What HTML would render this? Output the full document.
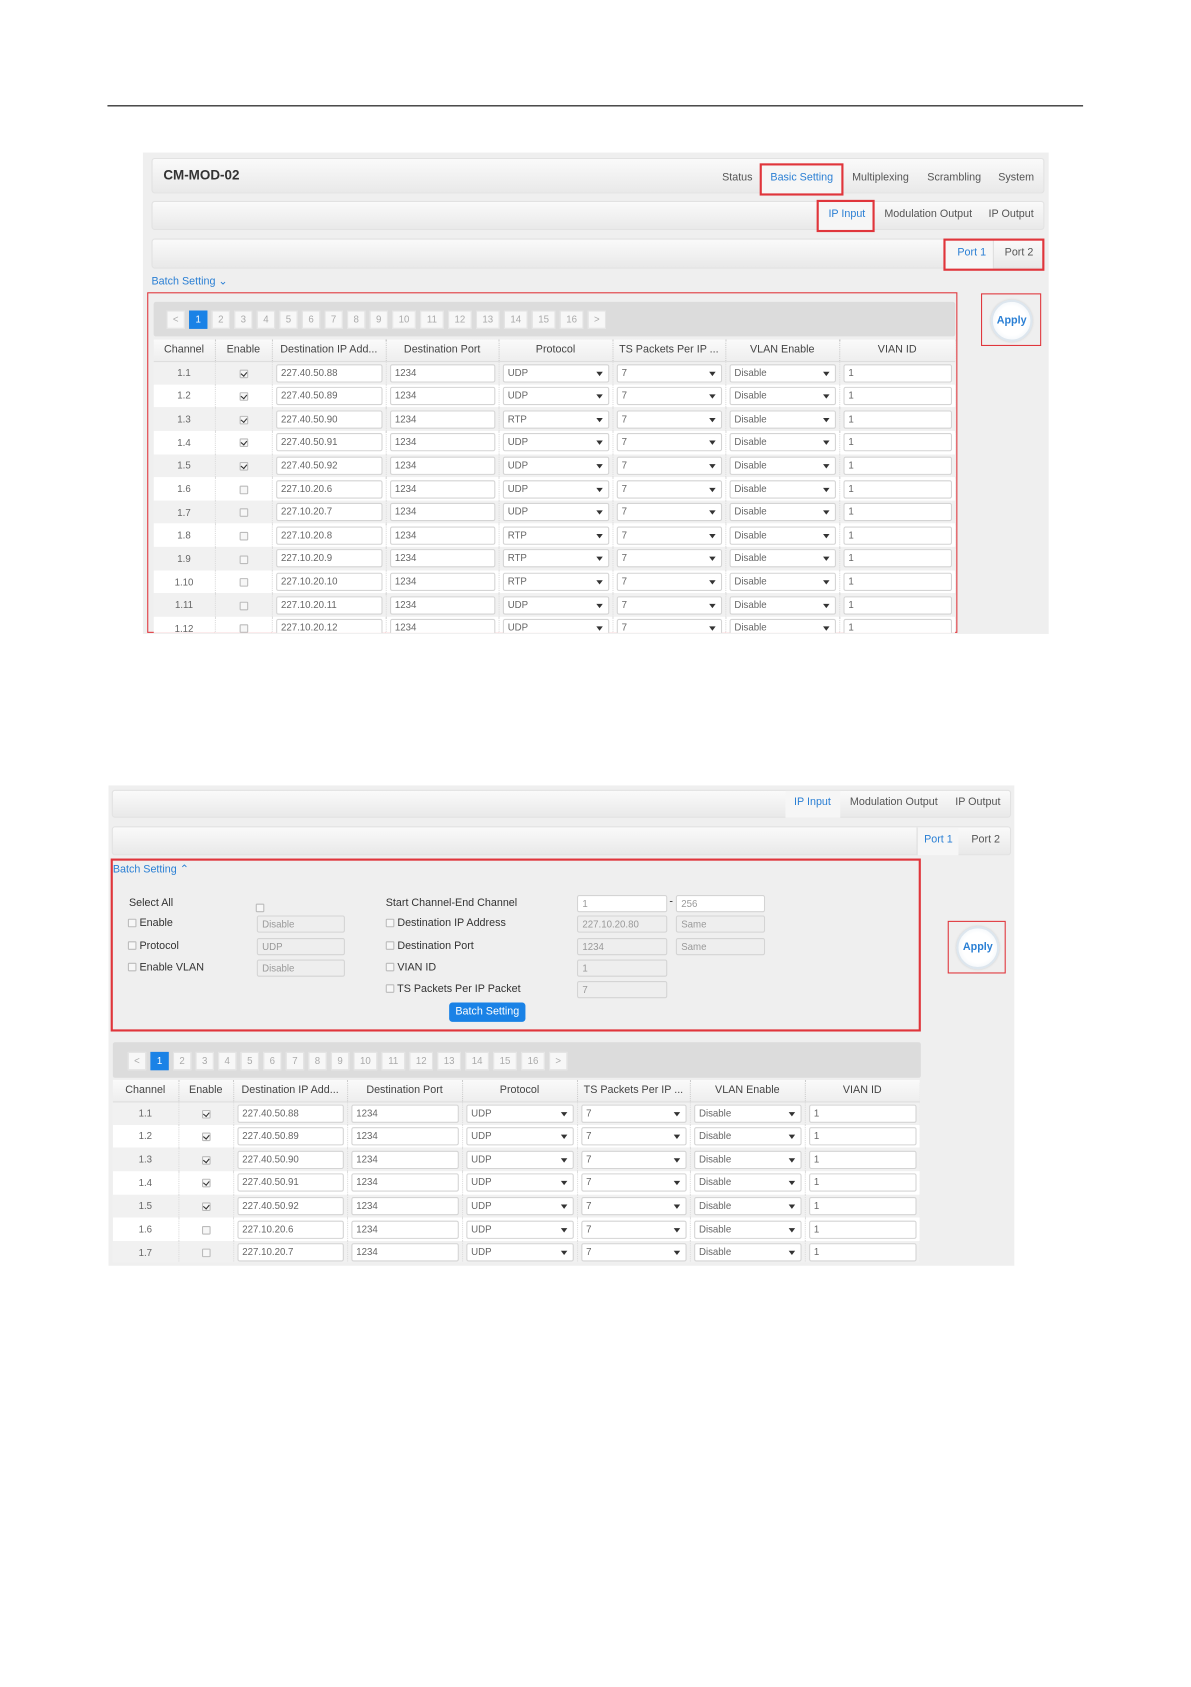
<!DOCTYPE html>
<html><head><meta charset="utf-8"><style>
*{box-sizing:border-box;margin:0;padding:0}
body{width:1191px;height:1684px;background:#fff;overflow:hidden;font-family:"Liberation Sans",sans-serif;color:#333}
#w{position:absolute;left:0;top:0;width:1110px;height:1570px;transform:scale(1.0745);transform-origin:0 0}
.a{position:absolute}
.g{background:#efefef}
.bar{background:linear-gradient(#fafafa,#e9e9e9);border:1px solid #e2e2e2;border-radius:3px}
.t{font-size:10px;color:#555;position:absolute;white-space:nowrap}
.blue{color:#2a7fd4}
.red{border:2px solid #e0353b;position:absolute}
.red1{border:1px solid #e0353b;position:absolute}
.pg{position:absolute;display:flex;gap:4px}
.pg span{width:17px;height:17px;background:#f7f7f7;border:1px solid #e4e4e4;font-size:9px;color:#aaa;text-align:center;line-height:15px}
.pg span.w{width:22px}
.pg span.on{background:#1a82e6;color:#fff;border-color:#1a82e6}
table{border-collapse:collapse;table-layout:fixed;font-size:9px;color:#666}
th{height:20px;font-size:10px;color:#444;font-weight:normal;background:linear-gradient(#fafafa,#eee);border-right:1px dotted #ccc;border-bottom:1px solid #ddd}
td{height:21.65px;text-align:center;border-right:1px dotted #ddd}
tr:nth-child(even) td{background:#f1f1f1}
tr:nth-child(odd) td{background:#fff}
.in{display:block;margin:0 3px;height:17px;border:1px solid #d4d4d4;border-radius:2px;background:#fff;text-align:left;padding-left:4px;line-height:15px;position:relative}
.sel:after{content:"";position:absolute;right:5px;top:6px;border:3.5px solid transparent;border-top:4px solid #333}
.cb{display:inline-block;width:8px;height:8px;border:1px solid #bbb;border-radius:1px;background:#f7f7f7;vertical-align:middle;position:relative}
.cb.on:after{content:"";position:absolute;left:1px;top:0;width:3px;height:4px;border-right:1.5px solid #333;border-bottom:1.5px solid #333;transform:rotate(40deg)}
.apply{position:absolute;border-radius:50%;background:radial-gradient(#fff 55%,#e6eef5);border:2px solid #dde6ee;box-shadow:0 0 2px #ccc;font-size:10px;font-weight:bold;color:#2a7fd4;text-align:center}
.fl{position:absolute;font-size:10px;color:#333;white-space:nowrap}
.fb{position:absolute;height:16px;border:1px solid #d4d4d4;border-radius:2px;background:#eee;font-size:9px;color:#999;padding-left:4px;line-height:14px}
.fb.wh{background:#fff}
</style></head><body><div id="w">
<div class="a" style="left:100px;top:98px;width:908px;height:1px;background:#000"></div>

<div class="a g" style="left:133px;top:142px;width:843px;height:448px"></div>
<div class="a bar" style="left:141px;top:147px;width:831px;height:33px"></div>
<div class="t" style="left:152px;top:156px;font-size:12.5px;font-weight:bold;color:#333">CM-MOD-02</div>
<div class="t" style="left:672px;top:160px">Status</div>
<div class="a" style="left:708px;top:152px;width:76px;height:28px;background:#f6f6f6"></div>
<div class="red" style="left:707px;top:152px;width:78px;height:30px"></div>
<div class="t blue" style="left:717px;top:160px">Basic Setting</div>
<div class="t" style="left:793px;top:160px">Multiplexing</div>
<div class="t" style="left:863px;top:160px">Scrambling</div>
<div class="t" style="left:929px;top:160px">System</div>
<div class="a bar" style="left:141px;top:187px;width:831px;height:27px"></div>
<div class="a" style="left:761px;top:187px;width:52px;height:27px;background:#f6f6f6"></div>
<div class="red" style="left:760px;top:186px;width:54px;height:30px"></div>
<div class="t blue" style="left:771px;top:194px">IP Input</div>
<div class="t" style="left:823px;top:194px">Modulation Output</div>
<div class="t" style="left:920px;top:194px">IP Output</div>
<div class="a bar" style="left:141px;top:222px;width:831px;height:28px"></div>
<div class="a" style="left:880px;top:223px;width:45px;height:27px;background:#f6f6f6;border-right:1px solid #ddd"></div>
<div class="red" style="left:878px;top:222px;width:94px;height:30px"></div>
<div class="t blue" style="left:891px;top:230px">Port 1</div>
<div class="t" style="left:935px;top:230px">Port 2</div>
<div class="t blue" style="left:141px;top:257px;font-size:10px">Batch Setting &#8964;</div>
<div class="red1" style="left:137px;top:272px;width:754px;height:317px"></div>
<div class="a" style="left:143px;top:281px;width:746px;height:32px;background:#dcdcdc;border-radius:2px"></div>
<div class="pg" style="left:155px;top:289px"><span>&lt;</span><span class="on">1</span><span>2</span><span>3</span><span>4</span><span>5</span><span>6</span><span>7</span><span>8</span><span>9</span><span class="w">10</span><span class="w">11</span><span class="w">12</span><span class="w">13</span><span class="w">14</span><span class="w">15</span><span class="w">16</span><span>&gt;</span></div>
<div class="red1" style="left:913px;top:273px;width:56px;height:49px"></div>
<div class="apply" style="left:922px;top:279px;width:39px;height:39px;line-height:35px">Apply</div>
<div class="a" style="left:143px;top:316px;width:746px;height:273px;overflow:hidden">
<table style="width:746px"><colgroup><col style="width:57px"><col style="width:53px"><col style="width:106px"><col style="width:105px"><col style="width:106px"><col style="width:105px"><col style="width:106px"><col style="width:108px"></colgroup>
<tr><th>Channel</th><th>Enable</th><th>Destination IP Add...</th><th>Destination Port</th><th>Protocol</th><th>TS Packets Per IP ...</th><th>VLAN Enable</th><th>VIAN ID</th></tr>
<tr><td>1.1</td><td><i class="cb on"></i></td><td><span class="in">227.40.50.88</span></td><td><span class="in">1234</span></td><td><span class="in sel">UDP</span></td><td><span class="in sel">7</span></td><td><span class="in sel">Disable</span></td><td><span class="in">1</span></td></tr>
<tr><td>1.2</td><td><i class="cb on"></i></td><td><span class="in">227.40.50.89</span></td><td><span class="in">1234</span></td><td><span class="in sel">UDP</span></td><td><span class="in sel">7</span></td><td><span class="in sel">Disable</span></td><td><span class="in">1</span></td></tr>
<tr><td>1.3</td><td><i class="cb on"></i></td><td><span class="in">227.40.50.90</span></td><td><span class="in">1234</span></td><td><span class="in sel">RTP</span></td><td><span class="in sel">7</span></td><td><span class="in sel">Disable</span></td><td><span class="in">1</span></td></tr>
<tr><td>1.4</td><td><i class="cb on"></i></td><td><span class="in">227.40.50.91</span></td><td><span class="in">1234</span></td><td><span class="in sel">UDP</span></td><td><span class="in sel">7</span></td><td><span class="in sel">Disable</span></td><td><span class="in">1</span></td></tr>
<tr><td>1.5</td><td><i class="cb on"></i></td><td><span class="in">227.40.50.92</span></td><td><span class="in">1234</span></td><td><span class="in sel">UDP</span></td><td><span class="in sel">7</span></td><td><span class="in sel">Disable</span></td><td><span class="in">1</span></td></tr>
<tr><td>1.6</td><td><i class="cb"></i></td><td><span class="in">227.10.20.6</span></td><td><span class="in">1234</span></td><td><span class="in sel">UDP</span></td><td><span class="in sel">7</span></td><td><span class="in sel">Disable</span></td><td><span class="in">1</span></td></tr>
<tr><td>1.7</td><td><i class="cb"></i></td><td><span class="in">227.10.20.7</span></td><td><span class="in">1234</span></td><td><span class="in sel">UDP</span></td><td><span class="in sel">7</span></td><td><span class="in sel">Disable</span></td><td><span class="in">1</span></td></tr>
<tr><td>1.8</td><td><i class="cb"></i></td><td><span class="in">227.10.20.8</span></td><td><span class="in">1234</span></td><td><span class="in sel">RTP</span></td><td><span class="in sel">7</span></td><td><span class="in sel">Disable</span></td><td><span class="in">1</span></td></tr>
<tr><td>1.9</td><td><i class="cb"></i></td><td><span class="in">227.10.20.9</span></td><td><span class="in">1234</span></td><td><span class="in sel">RTP</span></td><td><span class="in sel">7</span></td><td><span class="in sel">Disable</span></td><td><span class="in">1</span></td></tr>
<tr><td>1.10</td><td><i class="cb"></i></td><td><span class="in">227.10.20.10</span></td><td><span class="in">1234</span></td><td><span class="in sel">RTP</span></td><td><span class="in sel">7</span></td><td><span class="in sel">Disable</span></td><td><span class="in">1</span></td></tr>
<tr><td>1.11</td><td><i class="cb"></i></td><td><span class="in">227.10.20.11</span></td><td><span class="in">1234</span></td><td><span class="in sel">UDP</span></td><td><span class="in sel">7</span></td><td><span class="in sel">Disable</span></td><td><span class="in">1</span></td></tr>
<tr><td>1.12</td><td><i class="cb"></i></td><td><span class="in">227.10.20.12</span></td><td><span class="in">1234</span></td><td><span class="in sel">UDP</span></td><td><span class="in sel">7</span></td><td><span class="in sel">Disable</span></td><td><span class="in">1</span></td></tr>
</table></div>

<div class="a g" style="left:101px;top:731px;width:843px;height:447px"></div>
<div class="a bar" style="left:104px;top:735px;width:837px;height:26px"></div>
<div class="a" style="left:731px;top:736px;width:51px;height:25px;background:#f6f6f6"></div>
<div class="t blue" style="left:739px;top:741px">IP Input</div>
<div class="t" style="left:791px;top:741px">Modulation Output</div>
<div class="t" style="left:889px;top:741px">IP Output</div>
<div class="a bar" style="left:104px;top:769px;width:837px;height:27px"></div>
<div class="a" style="left:853px;top:770px;width:39px;height:26px;background:#f6f6f6;border-left:1px solid #ddd"></div>
<div class="t blue" style="left:860px;top:776px">Port 1</div>
<div class="t" style="left:904px;top:776px">Port 2</div>
<div class="red" style="left:103px;top:799px;width:754px;height:161px"></div>
<div class="t blue" style="left:105px;top:804px;font-size:10px">Batch Setting &#8963;</div>
<div class="fl" style="left:120px;top:835px">Select All</div>
<div class="a" style="left:238px;top:836px"><i class="cb"></i></div>
<div class="fl" style="left:119px;top:854px"><i class="cb"></i> Enable</div>
<div class="fb" style="left:239px;top:852px;width:82px">Disable</div>
<div class="fl" style="left:119px;top:875px"><i class="cb"></i> Protocol</div>
<div class="fb" style="left:239px;top:873px;width:82px">UDP</div>
<div class="fl" style="left:119px;top:895px"><i class="cb"></i> Enable VLAN</div>
<div class="fb" style="left:239px;top:893px;width:82px">Disable</div>
<div class="fl" style="left:359px;top:835px">Start Channel-End Channel</div>
<div class="fl" style="left:359px;top:854px"><i class="cb"></i> Destination IP Address</div>
<div class="fl" style="left:359px;top:875px"><i class="cb"></i> Destination Port</div>
<div class="fl" style="left:359px;top:895px"><i class="cb"></i> VIAN ID</div>
<div class="fl" style="left:359px;top:915px"><i class="cb"></i> TS Packets Per IP Packet</div>
<div class="fb wh" style="left:537px;top:833px;width:84px">1</div>
<div class="fl" style="left:623px;top:834px">-</div>
<div class="fb wh" style="left:629px;top:833px;width:83px">256</div>
<div class="fb" style="left:537px;top:852px;width:84px">227.10.20.80</div>
<div class="fb" style="left:629px;top:852px;width:83px">Same</div>
<div class="fb" style="left:537px;top:873px;width:84px">1234</div>
<div class="fb" style="left:629px;top:873px;width:83px">Same</div>
<div class="fb" style="left:537px;top:893px;width:84px">1</div>
<div class="fb" style="left:537px;top:913px;width:84px">7</div>
<div class="a" style="left:418px;top:933px;width:71px;height:18px;background:#1a82e6;border-radius:3px;color:#fff;font-size:10px;text-align:center;line-height:18px">Batch Setting</div>
<div class="red1" style="left:882px;top:857px;width:54px;height:49px"></div>
<div class="apply" style="left:890px;top:862px;width:40px;height:40px;line-height:36px">Apply</div>
<div class="a" style="left:105px;top:970px;width:752px;height:33px;background:#dcdcdc;border-radius:2px"></div>
<div class="pg" style="left:119px;top:979px"><span>&lt;</span><span class="on">1</span><span>2</span><span>3</span><span>4</span><span>5</span><span>6</span><span>7</span><span>8</span><span>9</span><span class="w">10</span><span class="w">11</span><span class="w">12</span><span class="w">13</span><span class="w">14</span><span class="w">15</span><span class="w">16</span><span>&gt;</span></div>
<div class="a" style="left:105px;top:1005px;width:751px;height:170px;overflow:hidden">
<table style="width:751px"><colgroup><col style="width:61px"><col style="width:51px"><col style="width:106px"><col style="width:107px"><col style="width:107px"><col style="width:105px"><col style="width:107px"><col style="width:107px"></colgroup>
<tr><th>Channel</th><th>Enable</th><th>Destination IP Add...</th><th>Destination Port</th><th>Protocol</th><th>TS Packets Per IP ...</th><th>VLAN Enable</th><th>VIAN ID</th></tr>
<tr><td>1.1</td><td><i class="cb on"></i></td><td><span class="in">227.40.50.88</span></td><td><span class="in">1234</span></td><td><span class="in sel">UDP</span></td><td><span class="in sel">7</span></td><td><span class="in sel">Disable</span></td><td><span class="in">1</span></td></tr>
<tr><td>1.2</td><td><i class="cb on"></i></td><td><span class="in">227.40.50.89</span></td><td><span class="in">1234</span></td><td><span class="in sel">UDP</span></td><td><span class="in sel">7</span></td><td><span class="in sel">Disable</span></td><td><span class="in">1</span></td></tr>
<tr><td>1.3</td><td><i class="cb on"></i></td><td><span class="in">227.40.50.90</span></td><td><span class="in">1234</span></td><td><span class="in sel">UDP</span></td><td><span class="in sel">7</span></td><td><span class="in sel">Disable</span></td><td><span class="in">1</span></td></tr>
<tr><td>1.4</td><td><i class="cb on"></i></td><td><span class="in">227.40.50.91</span></td><td><span class="in">1234</span></td><td><span class="in sel">UDP</span></td><td><span class="in sel">7</span></td><td><span class="in sel">Disable</span></td><td><span class="in">1</span></td></tr>
<tr><td>1.5</td><td><i class="cb on"></i></td><td><span class="in">227.40.50.92</span></td><td><span class="in">1234</span></td><td><span class="in sel">UDP</span></td><td><span class="in sel">7</span></td><td><span class="in sel">Disable</span></td><td><span class="in">1</span></td></tr>
<tr><td>1.6</td><td><i class="cb"></i></td><td><span class="in">227.10.20.6</span></td><td><span class="in">1234</span></td><td><span class="in sel">UDP</span></td><td><span class="in sel">7</span></td><td><span class="in sel">Disable</span></td><td><span class="in">1</span></td></tr>
<tr><td>1.7</td><td><i class="cb"></i></td><td><span class="in">227.10.20.7</span></td><td><span class="in">1234</span></td><td><span class="in sel">UDP</span></td><td><span class="in sel">7</span></td><td><span class="in sel">Disable</span></td><td><span class="in">1</span></td></tr>
</table></div>
</div></body></html>
